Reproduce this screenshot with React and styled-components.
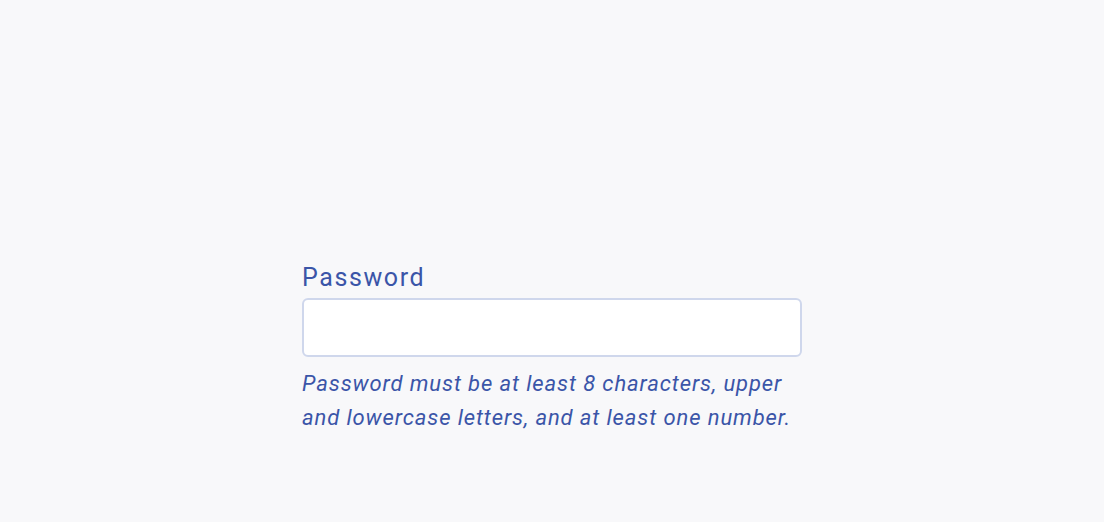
import React from 'react';
import styled, { createGlobalStyle } from 'styled-components';

const GlobalStyle = createGlobalStyle`
  html, body {
    margin: 0;
    padding: 0;
    background-color: #f8f8fa;
    font-family: Roboto, "Liberation Sans", sans-serif;
  }
`;

const Page = styled.div`
  min-height: 522px;
  display: flex;
  justify-content: center;
  padding-top: 261px;
  box-sizing: border-box;
`;

const Field = styled.div`
  width: 500px;
  display: flex;
  flex-direction: column;
`;

const Label = styled.label`
  font-size: 25px;
  line-height: 34px;
  letter-spacing: 1.6px;
  color: #3b55a8;
  margin-bottom: 3px;
`;

const Input = styled.input`
  height: 59px;
  box-sizing: border-box;
  border: 2px solid #cfd7ec;
  border-radius: 6px;
  background: #fff;
  outline: none;
  padding: 0 14px;
  font-size: 20px;
  font-family: inherit;
`;

const Hint = styled.p`
  margin: 10px 0 0;
  font-size: 22px;
  line-height: 34px;
  letter-spacing: 0.9px;
  font-style: italic;
  color: #3b55a8;
`;

export default function App() {
  return (
    <>
      <GlobalStyle />
      <Page>
        <Field>
          <Label htmlFor="password">Password</Label>
          <Input id="password" type="password" />
          <Hint>
            Password must be at least 8 characters, upper and lowercase letters, and at least one number.
          </Hint>
        </Field>
      </Page>
    </>
  );
}
